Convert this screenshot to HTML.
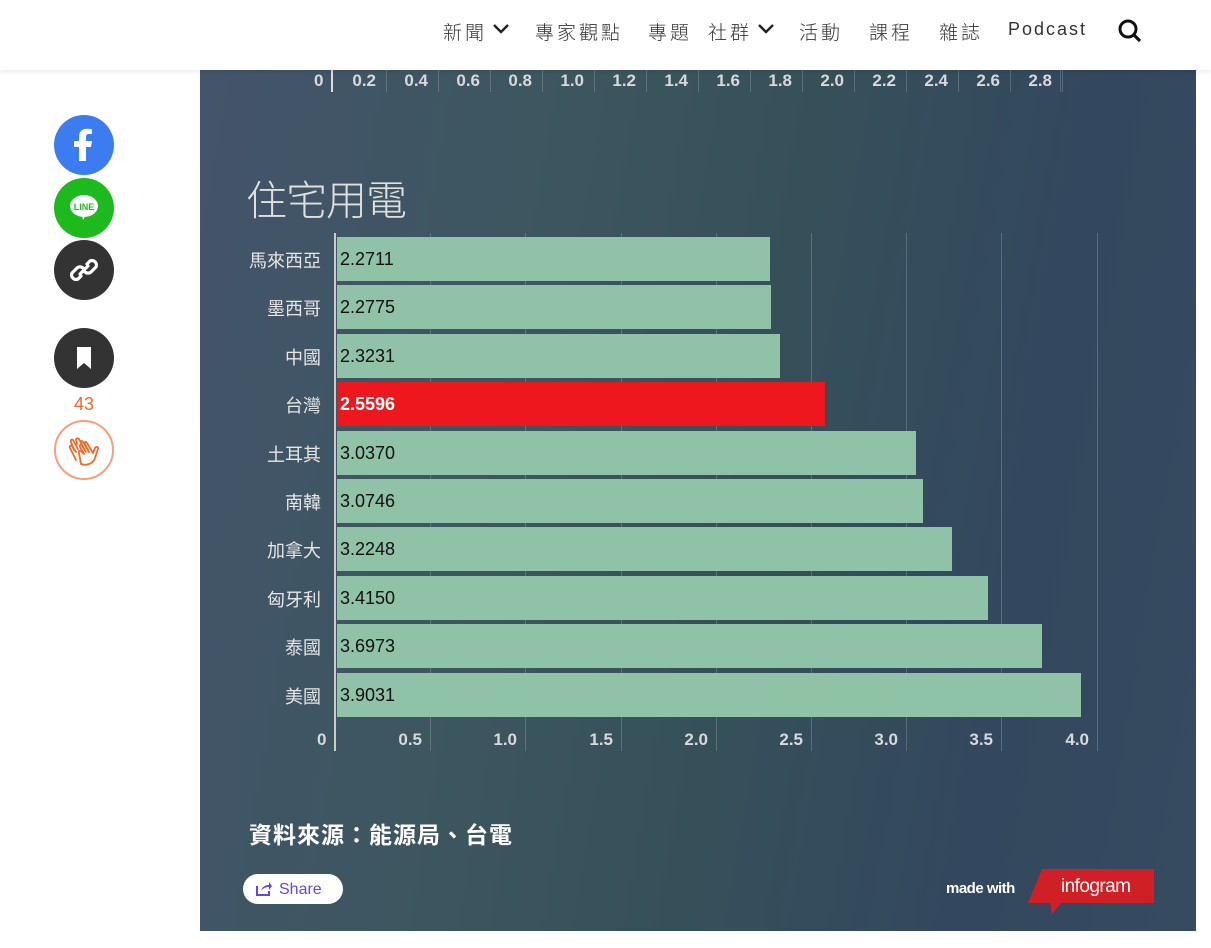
<!DOCTYPE html>
<html><head><meta charset="utf-8"><style>
*{margin:0;padding:0;box-sizing:border-box}
body{width:1211px;height:948px;background:#fff;position:relative;overflow:hidden;font-family:"Liberation Sans","Noto Sans CJK TC",sans-serif}
.nav{position:absolute;left:0;top:0;width:1211px;height:70px;background:#fff;box-shadow:0 2px 4px rgba(0,0,0,.08);z-index:5}
.nav span{position:absolute;top:18px;font-size:19px;color:#333;letter-spacing:3px;font-family:"Liberation Sans","Noto Sans CJK TC",sans-serif;font-weight:300}
.chev{position:absolute;top:22px}
.panel{position:absolute;left:200px;top:70px;width:996px;height:861px;background:linear-gradient(100deg,#44546a 0%,#3d5660 30%,#36505a 55%,#33475e 80%,#364b60 100%);overflow:hidden}
.a{position:absolute;color:#d7d9dc;font-weight:bold;font-size:17px}
.g{position:absolute;width:1px;background:rgba(255,255,255,.18)}
.lab{position:absolute;right:0;width:120px;text-align:right;color:#e6e6e6;font-size:18px}
.bar{position:absolute;left:137px;height:44px;background:#8fc2a7}
.bar span{position:absolute;left:3px;top:12px;font-size:18px;color:#111}
.circ{position:absolute;left:54px;width:60px;height:60px;border-radius:50%}
</style></head><body>
<div class="nav">
<span style="left:443px">新聞</span>
<svg class="chev" style="left:492px" width="18" height="14" viewBox="0 0 18 14"><path d="M2 3l7 7 7-7" stroke="#222" stroke-width="2.4" fill="none"/></svg>
<span style="left:535px">專家觀點</span>
<span style="left:648px">專題</span>
<span style="left:708px">社群</span>
<svg class="chev" style="left:757px" width="18" height="14" viewBox="0 0 18 14"><path d="M2 3l7 7 7-7" stroke="#222" stroke-width="2.4" fill="none"/></svg>
<span style="left:799px">活動</span>
<span style="left:869px">課程</span>
<span style="left:939px">雜誌</span>
<span style="left:1008px;letter-spacing:2px;top:19px;font-size:18px">Podcast</span>
<svg style="position:absolute;left:1117px;top:18px" width="26" height="26" viewBox="0 0 26 26"><circle cx="11" cy="11" r="8" stroke="#111" stroke-width="3" fill="none"/><path d="M17 17l6 6" stroke="#111" stroke-width="3.2"/></svg>
</div>

<div class="circ" style="top:115px;background:#3b7cf0"><svg width="60" height="60" viewBox="0 0 60 60"><path d="M32 46V32h5l1-6h-6v-4c0-2 1-3 3-3h3v-5c-1 0-3-.3-5-.3-5 0-8 3-8 8v4.3h-5v6h5v14z" fill="#fff"/></svg></div>
<div class="circ" style="top:178px;background:#1cba1c"><svg width="60" height="60" viewBox="0 0 60 60"><ellipse cx="30" cy="28" rx="14" ry="11" fill="#fff"/><path d="M28 37l4 0-3 5z" fill="#fff"/><text x="30" y="32" font-size="9" font-weight="bold" fill="#1cba1c" text-anchor="middle" font-family="Liberation Sans">LINE</text></svg></div>
<div class="circ" style="top:240px;background:#333"><svg width="60" height="60" viewBox="0 0 60 60"><g stroke="#fff" stroke-width="3.2" fill="none" stroke-linecap="round"><path d="M27 36l-3 3a4.5 4.5 0 0 1-6-6l5-5a4.5 4.5 0 0 1 6 0"/><path d="M33 24l3-3a4.5 4.5 0 0 1 6 6l-5 5a4.5 4.5 0 0 1-6 0"/><path d="M26 34l8-8"/></g></svg></div>
<div class="circ" style="top:328px;background:#333"><svg width="60" height="60" viewBox="0 0 60 60"><path d="M23 19h14v22l-7-6-7 6z" fill="#fff"/></svg></div>
<div style="position:absolute;left:54px;width:60px;top:394px;text-align:center;color:#f06a2a;font-size:18px">43</div>
<div class="circ" style="top:420px;border:2px solid #f4a07a"><svg width="56" height="56" viewBox="0 0 56 56"><g stroke="#f06a2a" stroke-width="1.8" fill="none" stroke-linejoin="round" stroke-linecap="round"><path d="M20 38l-6-12c-1-2 1-3 2-2l4 6M18 28l-3-8c-1-2 1-3 2-2l5 9M21 22l-1-4c0-2 2-2 3-1l4 8"/><path d="M25 42c5 2 12 0 14-6l3-9c1-2-2-3-3-1l-2 5-6-10c-1-2-3-1-2 1l4 8-6-10c-1-2-3-1-2 1l5 9-4-6c-1-2-3-1-2 1l4 7-3-3c-1-1-3 0-2 2z"/></g></svg></div>

<div class="panel">
<div class="g" style="left:131px;top:0;height:22px;width:2px;background:#ddd"></div>
<div class="a" style="left:114px;top:1px">0</div>
<div id="topax"></div>
<div style="position:absolute;left:46px;top:97px;font-size:41px;color:#e0e0e0;font-weight:300;letter-spacing:-1px">住宅用電</div>
<div id="chart"></div>
<div style="position:absolute;left:49px;top:746px;font-size:23px;color:#fff;font-weight:bold;letter-spacing:1px">資料來源：能源局、台電</div>
<div style="position:absolute;left:43px;top:804px;width:100px;height:30px;border-radius:15px;background:#fff;color:#6b46d6;font-size:16px;padding:7px 0 0 36px">Share
<svg style="position:absolute;left:13px;top:7px" width="16" height="15" viewBox="0 0 16 15"><path d="M1 5v9h12v-4" stroke="#6b46d6" stroke-width="2" fill="none"/><path d="M5 10c1-4 4-6 8-6V1l3 4-3 4V6c-3 0-6 1-8 4z" fill="#6b46d6"/></svg></div>
<div style="position:absolute;left:746px;top:810px;color:#fff;font-weight:bold;font-size:15px;letter-spacing:-.5px">made with</div>
<svg style="position:absolute;left:828px;top:799px" width="126" height="46" viewBox="0 0 126 46"><path d="M14 0h112v34H0z" fill="#d11f26"/><path d="M22 33h12l-10 12z" fill="#d11f26"/><text x="68" y="23" fill="#fff" font-size="19" text-anchor="middle" font-family="Liberation Sans" textLength="70">infogram</text></svg>
</div>
<script>
var t='',p=document.getElementById('topax');
for(var i=1;i<=14;i++){var x=186+52*(i-1);t+='<div class="g" style="left:'+x+'px;top:0;height:22px"></div><div class="a" style="left:'+(x-50)+'px;width:40px;text-align:right;top:1px">'+(i*0.2).toFixed(1)+'</div>';}
t+='<div class="g" style="left:860px;top:0;height:22px"></div>';
p.innerHTML=t;
var d=[['馬來西亞','2.2711',770],['墨西哥','2.2775',771],['中國','2.3231',780],['台灣','2.5596',825],['土耳其','3.0370',916],['南韓','3.0746',923],['加拿大','3.2248',952],['匈牙利','3.4150',988],['泰國','3.6973',1042],['美國','3.9031',1081]];
var h='';
for(var k=1;k<=8;k++){var x=135+95.2*k;h+='<div class="g" style="left:'+x.toFixed(0)+'px;top:163px;height:518px"></div><div class="a" style="left:'+(x-52).toFixed(0)+'px;width:44px;text-align:right;top:660px">'+(k*0.5).toFixed(1)+'</div>';}
h+='<div class="a" style="left:117px;top:660px">0</div>';
d.forEach(function(r,i){var y=167+48.4*i;var red=i==3;
h+='<div class="lab" style="left:0;width:121px;top:'+(y+10)+'px">'+r[0]+'</div>';
h+='<div class="bar" style="top:'+y.toFixed(0)+'px;width:'+(r[2]-337)+'px;'+(red?'background:#ee171d':'')+'"><span style="'+(red?'color:#fff;font-weight:bold':'')+'">'+r[1]+'</span></div>';});
h+='<div class="g" style="left:134px;top:163px;height:518px;width:2px;background:#ccc"></div>';
document.getElementById('chart').innerHTML=h;
</script>
</body></html>
